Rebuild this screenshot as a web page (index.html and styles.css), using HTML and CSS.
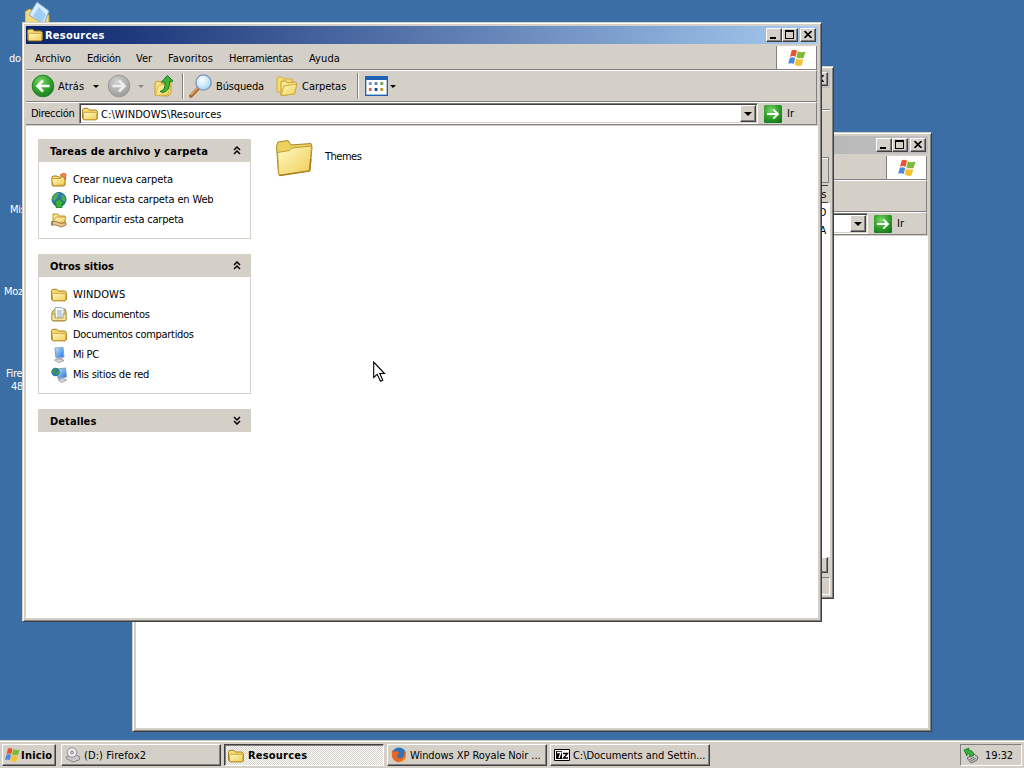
FILE: index.html
```html
<!DOCTYPE html>
<html lang="es">
<head>
<meta charset="utf-8">
<title>Resources</title>
<link rel="stylesheet" href="styles.css">
</head>
<body>
<svg class="defs" width="0" height="0">
  <defs>
    <linearGradient id="yel" x1="0" y1="0" x2="1" y2="1"><stop offset="0" stop-color="#fffac4"/><stop offset="1" stop-color="#f0cc55"/></linearGradient>
    <radialGradient id="grn" cx=".4" cy=".3" r=".8"><stop offset="0" stop-color="#7cd76b"/><stop offset=".5" stop-color="#36a52e"/><stop offset="1" stop-color="#13751a"/></radialGradient>
    <radialGradient id="gry" cx=".4" cy=".3" r=".8"><stop offset="0" stop-color="#d0d0ce"/><stop offset="1" stop-color="#969694"/></radialGradient>
    <radialGradient id="glass" cx=".4" cy=".35" r=".7"><stop offset="0" stop-color="#fff"/><stop offset="1" stop-color="#9bd8f4"/></radialGradient>
    <linearGradient id="screen" x1="0" y1="0" x2="1" y2="1"><stop offset="0" stop-color="#bfe6ff"/><stop offset="1" stop-color="#1c72e0"/></linearGradient>
    <symbol id="folder" viewBox="0 0 16 16"><path d="M.6 12.500V3.600L2 2.300h3.800L7.400 4h6.500l1.400 1.500v7.300l-1.200 1H1.800z" fill="#f6dc72" stroke="#a67a18"/><path d="M1.500 13.400V7.300l1-1h11.300l1 1v5.600l-1 .7H2z" fill="url(#yel)" stroke="#c0922a" stroke-width=".8"/></symbol>
    <symbol id="flag" viewBox="0 0 20 18"><path d="M4.600 1.600Q7 0 10 1.800L8.500 8Q6 6.300 3 7.900z" fill="#e9532c"/><path d="M10.900 2.200Q14 4 18.500 2.500L16.700 8.800Q13 10 9.400 8.400z" fill="#7dba36"/><path d="M2.700 8.900Q5.500 7.500 8.200 9L6.700 15Q4.500 13.500 1.200 14.800z" fill="#4c86dd"/><path d="M9.100 9.400Q12.500 11.200 16.400 9.900L14.600 16.500Q11 17.800 7.600 15.600z" fill="#f6c22d"/></symbol>
    <symbol id="go" viewBox="0 0 18 18"><rect width="18" height="18" rx="1.500" fill="url(#grn)"/><path d="M3 9H14M9.300 4.300 14 9 9.300 13.700" fill="none" stroke="#fff" stroke-width="1.800"/></symbol>
    <symbol id="chev" viewBox="0 0 8 9"><path d="M1 4 4 1 7 4M1 8 4 5 7 8" fill="none" stroke="#000" stroke-width="1.500"/></symbol>
    <symbol id="pc" viewBox="0 0 16 16"><path d="M4 1 12 .5 13 10 5 11z" fill="url(#screen)" stroke="#8c9cba"/><path d="M7 11 10.500 10.500 12 13H7z" fill="#b5b5c0"/><path d="M3.500 13 9 11.700 13 13.500 8 15.500z" fill="#d9d9df" stroke="#85858f" stroke-width=".7"/></symbol>
  </defs>
</svg>

<main class="desktop">
  <svg class="desk-icon" width="28" height="26" viewBox="0 0 28 26"><path d="M0 25V11l4-3 5 2 15 4v11z" fill="#f3dc78" stroke="#c3a03c"/><path d="M4 14 12 1l12 9-5 13z" fill="#d7edff" stroke="#7fa9d2"/><path d="M8 15 14 6l7 8-4 8z" fill="#9fcdf4"/></svg>
  <span class="desk-label l1">do</span>
  <span class="desk-label l2">Mis</span>
  <span class="desk-label l3">Moz</span>
  <span class="desk-label l4">Fire</span>
  <span class="desk-label l5">48</span>

  <section class="window back">
    <header class="titlebar inactive">
      <div class="caption"></div>
      <div class="controls"><button class="ctl"><i class="min"></i></button><button class="ctl"><i class="max"></i></button><button class="ctl close"><svg width="8" height="7"><path d="M.5 0 7.500 7M7.500 0 .5 7" stroke="#000" stroke-width="1.600"/></svg></button></div>
    </header>
    <div class="bars">
      <nav class="menubar"><div class="menus"></div><div class="brand"><svg width="20" height="18"><use href="#flag"/></svg></div></nav>
      <div class="toolbar"></div>
      <div class="address"><div class="field"><span class="path"></span><b class="drop"><i class="tri"></i></b></div><svg class="go" width="18" height="18"><use href="#go"/></svg><span class="ir">Ir</span></div>
    </div>
    <div class="content"></div>
  </section>

  <section class="window middle">
    <header class="titlebar inactive"><div class="caption"></div><div class="controls"><button class="ctl close"><svg width="8" height="7"><path d="M.5 0 7.500 7M7.500 0 .5 7" stroke="#000" stroke-width="1.600"/></svg></button></div></header>
    <div class="mid-menu"></div>
    <div class="mid-tools"></div>
    <div class="mid-field"></div>
    <div class="mid-head">s</div>
    <div class="mid-list"><span>D</span><span>A</span></div>
    <div class="mid-scroll"></div>
    <div class="mid-status"></div>
  </section>

  <section class="window front">
    <header class="titlebar">
      <svg width="16" height="16"><use href="#folder"/></svg>
      <div class="caption">Resources</div>
      <div class="controls"><button class="ctl"><i class="min"></i></button><button class="ctl"><i class="max"></i></button><button class="ctl close"><svg width="8" height="7"><path d="M.5 0 7.500 7M7.500 0 .5 7" stroke="#000" stroke-width="1.600"/></svg></button></div>
    </header>
    <div class="bars">
      <nav class="menubar">
        <div class="menus"><span class="m1">Archivo</span><span class="m2">Edición</span><span class="m3">Ver</span><span class="m4">Favoritos</span><span class="m5">Herramientas</span><span class="m6">Ayuda</span></div>
        <div class="brand"><svg width="20" height="18"><use href="#flag"/></svg></div>
      </nav>
      <div class="toolbar">
        <div class="tool back-btn"><svg width="24" height="24" viewBox="0 0 24 24"><circle cx="12" cy="12" r="10.800" fill="url(#grn)" stroke="#248422"/><path d="M18.500 12H7M12 6.500 6.500 12l5.500 5.500" fill="none" stroke="#fff" stroke-width="2.600"/></svg><span>Atrás</span><i class="tri"></i></div>
        <div class="tool fwd-btn"><svg width="24" height="24" viewBox="0 0 24 24"><circle cx="12" cy="12" r="10.800" fill="url(#gry)" stroke="#999"/><path d="M5.500 12H17M12 6.500 17.500 12 12 17.500" fill="none" stroke="#eee" stroke-width="2.600"/></svg><i class="tri dim"></i></div>
        <svg class="up-btn" width="20" height="24" viewBox="0 0 20 24"><path d="M1 21.500V9l2-2 4 1 1 2 9-2v11l-3 3z" fill="#f5e07c" stroke="#c69d2c"/><path d="M1.500 21.500 4 12l13-3-3 12z" fill="url(#yel)" stroke="#d3ad3b" stroke-width=".8"/><path d="M6 17.500Q12 16 11 8H7.500L13.500 1.500 19 7l-3.500.7Q16 17 9 18.500z" fill="#3eb334" stroke="#187a20"/></svg>
        <i class="sep"></i>
        <div class="tool search-btn"><svg width="24" height="24" viewBox="0 0 24 24"><path d="M2 22 9.500 14" stroke="#ad642b" stroke-width="3.600" stroke-linecap="round"/><path d="M2 21 9 13.500" stroke="#e9ae6a" stroke-width="1.300"/><circle cx="14.500" cy="8.500" r="7.600" fill="url(#glass)" stroke="#8193bd" stroke-width="1.400"/></svg><span>Búsqueda</span></div>
        <div class="tool folders-btn"><svg width="22" height="22" viewBox="0 0 22 22"><path d="M1 17V3l1-1 4 0 2 2 8 0v13z" fill="#f4dc72" stroke="#d0ab3e"/><path d="M5 20.500V7l1-1h4l1.500 2 8-1 1 1-2 11z" fill="#f9e891" stroke="#c69b2d"/><path d="M5 20.500 8 11l13-2-2.500 10z" fill="url(#yel)" stroke="#cfaa3b"/></svg><span>Carpetas</span></div>
        <i class="sep"></i>
        <svg class="views-btn" width="23" height="20" viewBox="0 0 24 20" preserveAspectRatio="none"><rect x=".7" y=".7" width="22.600" height="18.600" fill="#fff" stroke="#1d62b5" stroke-width="1.400"/><path d="M0 0H24V4H0z" fill="#1d62b5"/><path d="M4 6h3v3H4z" fill="#7894d0"/><path d="M10 6h3v3h-3z" fill="#6d84bd"/><path d="M16 6h3v3h-3z" fill="#71a94b"/><path d="M4 12h3v3H4z" fill="#dd6a50"/><path d="M10 12h3v3h-3z" fill="#174f9d"/><path d="M16 12h3v3h-3z" fill="#b09b35"/></svg><i class="tri"></i>
      </div>
      <div class="address"><span class="addr-label">Dirección</span><div class="field"><svg width="16" height="16"><use href="#folder"/></svg><span class="path">C:\WINDOWS\Resources</span><b class="drop"><i class="tri"></i></b></div><svg class="go" width="18" height="18"><use href="#go"/></svg><span class="ir">Ir</span></div>
    </div>
    <div class="content explorer">
      <aside class="tasks">
        <section class="panel">
          <h2><span class="h1w">Tareas de archivo y carpeta</span><svg width="8" height="9"><use href="#chev"/></svg></h2>
          <ul>
            <li><svg width="16" height="16" viewBox="0 0 16 16"><path d="M1 13V5l1-1h4l1 1h7v8l-1 1H2z" fill="#f6dc72" stroke="#a67a18"/><path d="M2 13.500 .8 6.500h9Q11 6 11 4l3 3-1 6z" fill="url(#yel)" stroke="#c0922a" stroke-width=".8"/><path d="M9 3Q12 0 15 2l-.5 6-2-3Q11 4 9 3z" fill="#f08a4a" stroke="#d0562a" stroke-width=".7"/></svg><span class="t1">Crear nueva carpeta</span></li>
            <li><svg width="16" height="16" viewBox="0 0 16 16"><circle cx="8" cy="7.500" r="7" fill="#2d79c5" stroke="#296a91"/><path d="M2 4q3-4 6-3L6 6 3 9 1 7zM10 2l4 3v5l-3-2z" fill="#52ab4e"/><path d="M2.500 12 8 6.500 13.500 12H11v3.500H5V12z" fill="#39b53b" stroke="#127225" stroke-width=".8"/></svg><span class="t2">Publicar esta carpeta en Web</span></li>
            <li><svg width="16" height="16" viewBox="0 0 16 16"><path d="M2 2h5l1 2h6v6H2z" fill="#ffec94" stroke="#ba9029"/><path d="M2 10 5 5h10l-2 6H3z" fill="url(#yel)" stroke="#ba9029" stroke-width=".8"/><path d="M1 9.500h4l5 2 5-1v2.500l-5 2-5-2H1z" fill="#edc48b" stroke="#8d6533" stroke-width=".8"/><path d="M0 9.500h2v4H0z" fill="#8d8a5a"/></svg><span class="t3">Compartir esta carpeta</span></li>
          </ul>
        </section>
        <section class="panel">
          <h2><span class="h2w">Otros sitios</span><svg width="8" height="9"><use href="#chev"/></svg></h2>
          <ul>
            <li><svg width="16" height="16"><use href="#folder"/></svg><span class="t4">WINDOWS</span></li>
            <li><svg width="16" height="16" viewBox="0 0 16 16"><path d="M1 13V5l3-3h10l1 3v8l-1 1H2z" fill="#f0d477" stroke="#a68533"/><path d="M4 .6h7l2 2v10H4z" fill="#fafdff" stroke="#7895a8" stroke-width=".8"/><path d="M6 4h5M6 6h5M6 8h5M6 10h5" stroke="#82a8c5"/><path d="M1 7h3v4h8V7h3v6.500H1z" fill="#f8e79b" stroke="#a68533" stroke-width=".7"/></svg><span class="t5">Mis documentos</span></li>
            <li><svg width="16" height="16"><use href="#folder"/></svg><span class="t6">Documentos compartidos</span></li>
            <li><svg width="16" height="16"><use href="#pc"/></svg><span class="t7">Mi PC</span></li>
            <li><svg width="16" height="16" viewBox="0 0 16 16"><path d="M6 2 14.500 1 15.500 10 7 11.500z" fill="url(#screen)" stroke="#8c9cba"/><path d="M7 13 12 11.500 15.500 13 11 15.500z" fill="#d9d9df" stroke="#85858f" stroke-width=".7"/><circle cx="4.500" cy="5" r="4.200" fill="#2d73c4"/><path d="M1 4q2-3 5-3L5 5 3 8zM5 6l3-3v4L6 9z" fill="#3d9945"/></svg><span class="t8">Mis sitios de red</span></li>
          </ul>
        </section>
        <section class="panel closed"><h2><span class="h3w">Detalles</span><svg class="flip" width="8" height="9"><use href="#chev"/></svg></h2></section>
      </aside>
      <div class="files"><svg width="40" height="38" viewBox="0 0 40 38"><path d="M3.500 35 1.500 7.500 3 3l10-1.500L16 6l20-1.500L37 8 35 31z" fill="#ecd15c" stroke="#a98425"/><path d="M4 36.500 2.500 13.500 14.500 11.500 17 9l19.500-2L34.500 32z" fill="url(#yel)" stroke="#c59b32"/><path d="M4.500 36.500 34.500 32l1.400-12" fill="none" stroke="#a97b1c" stroke-width="1.400"/></svg><span class="t9">Themes</span></div>
    </div>
  </section>
  <svg class="cursor" width="13" height="22" viewBox="0 0 13 22"><path d="M.7 1V16.500L4.200 13.300 7.500 20.300 9.800 19.300 6.800 12.500H11.500z" fill="#fff" stroke="#000" stroke-width="1.100"/></svg>
</main>

<footer class="taskbar">
  <button class="start"><svg width="17" height="16" viewBox="0 0 20 18"><use href="#flag"/></svg><span>Inicio</span></button>
  <div class="task-list">
    <button class="task"><svg width="16" height="16" viewBox="0 0 16 16"><path d="M1 10 9 7l6 3-1 3-6 2-6-3z" fill="#c9c9ce" stroke="#777" stroke-width=".8"/><circle cx="7" cy="5.500" r="4.800" fill="#ededf1" stroke="#8c8c92"/><circle cx="7" cy="5.500" r="1.500" fill="#c9c9ce" stroke="#888"/></svg><span class="k1">(D:) Firefox2</span></button>
    <button class="task pressed"><svg width="16" height="16"><use href="#folder"/></svg><span class="k2">Resources</span></button>
    <button class="task"><svg width="16" height="16" viewBox="0 0 16 16"><circle cx="8" cy="7.500" r="7" fill="#2e73b8"/><path d="M1 3Q3 6 5 4q3 0 3 3-2 0-2 2 1 3 4 2 4-1 3-7 4 5 0 9-4 4-9 1Q0 11 1 3z" fill="#ea6722"/><path d="M13 4q4 5-1 9-2 2-5 2 9 1 8-8z" fill="#ffb63c"/></svg><span class="k3">Windows XP Royale Noir ...</span></button>
    <button class="task"><svg width="16" height="16" viewBox="0 0 16 16"><path d="M.5 2.500h15v11H.5z" fill="#fff" stroke="#000"/><path d="M2 4h6v8H2z" fill="#000"/><path d="M3 5.500h4L5 11" fill="none" stroke="#fff" stroke-width="1.300"/><path d="M9 6.500h4.500L9.500 11h4.500" fill="none" stroke="#000" stroke-width="1.300"/></svg><span class="k4">C:\Documents and Settin...</span></button>
  </div>
  <div class="tray"><svg width="16" height="16" viewBox="0 0 16 16"><path d="M4 11 11 7l4 3-1 3-6 3z" fill="#ccc" stroke="#666"/><path d="M6 13 11 10M8 14l5-3" stroke="#666"/><path d="M1 3 6 1l-1 2q5 0 6 5l-4 2Q7 6 4 6v3z" fill="#39b43a" stroke="#176f25" stroke-width=".8"/></svg><span>19:32</span></div>
</footer>
</body>
</html>
```
FILE: styles.css
```css
* { box-sizing: border-box; }
body { margin: 0; width: 1024px; height: 768px; overflow: hidden; background: #3a6ea5; color: #000; font: 11px/14px "DejaVu Sans Condensed", "DejaVu Sans", sans-serif; letter-spacing: -0.3px; display: flex; flex-direction: column; }
button { font: inherit; letter-spacing: inherit; color: inherit; padding: 0; margin: 0; border: 0; background: #d4d0c8; }
span { white-space: nowrap; }
svg { flex: none; display: block; }
.defs { position: absolute; }
.desktop { position: relative; height: 740px; flex: none; }
.desk-icon { position: absolute; left: 25px; top: 1px; }
.desk-label { position: absolute; color: #fff; }
.l1 { left: 9px; top: 52px; }
.l2 { left: 10px; top: 203px; }
.l3 { left: 4px; top: 285px; }
.l4 { left: 6px; top: 367px; }
.l5 { left: 11px; top: 380px; }

/* Window frame */
.window { position: absolute; display: flex; flex-direction: column; background: #d4d0c8; border: 1px solid; border-color: #d4d0c8 #404040 #404040 #d4d0c8; box-shadow: inset 1px 1px #fff, inset -1px -1px #808080; padding: 3px; }
.front { left: 22px; top: 22px; width: 800px; height: 600px; }
.back { left: 132px; top: 132px; width: 800px; height: 600px; }
.middle { left: 234px; top: 66px; width: 600px; height: 533px; }
.titlebar { display: flex; align-items: center; flex: none; height: 18px; padding: 0 2px 0 1px; background: linear-gradient(90deg, #0a246a, #a6caf0); color: #fff; }
.titlebar.inactive { background: linear-gradient(90deg, #808080, #c0c0c0); }
.caption { flex: 1; font-weight: bold; padding-left: 2px; padding-top: 1px; letter-spacing: 0.25px; }
.controls { display: flex; }
.ctl { width: 16px; height: 14px; border: 1px solid; border-color: #fff #404040 #404040 #fff; box-shadow: inset -1px -1px #808080; display: flex; justify-content: center; align-items: center; padding: 0 1px 1px 0; }
.ctl.close { margin-left: 2px; }
.min { width: 6px; height: 2px; background: #000; margin: 7px 2px 0 0; }
.max { width: 9px; height: 9px; border: 1px solid #000; border-top-width: 2px; }

/* Menu, tool and address bars */
.bars { flex: none; padding: 2px 1px 0 0; height: 82px; }
.menubar { height: 24px; display: flex; border-bottom: 1px solid #808080; border-right: 1px solid #808080; }
.menus { flex: 1; display: flex; align-items: center; padding: 2px 0 0 9px; }
.menus span { flex: none; }
.m1 { width: 52px; letter-spacing: -0.15px; }
.m2 { width: 49px; }
.m3 { width: 32px; letter-spacing: 0; }
.m4 { width: 61px; letter-spacing: 0.03px; }
.m5 { width: 80px; }
.m6 { letter-spacing: 0.1px; }
.brand { width: 40px; background: #fff; border-left: 1px solid #808080; display: flex; align-items: center; justify-content: center; }
.toolbar { height: 32px; border-top: 1px solid #fff; border-right: 1px solid #808080; border-bottom: 1px solid #808080; display: flex; align-items: center; padding-left: 5px; }
.tool { display: flex; align-items: center; }
.tool span { padding-top: 1px; letter-spacing: -0.1px; }
.tri { border: 3px solid transparent; border-top-color: #000; border-bottom: 0; width: 0; height: 0; flex: none; }
.tri.dim { border-top-color: #888; }
.back-btn { width: 76px; }
.back-btn span { width: 38px; margin-left: 3px; letter-spacing: 0.1px; }
.back-btn .tri { margin-left: -3px; }
.fwd-btn { width: 47px; }
.fwd-btn .tri { margin-left: 7px; }
.sep { width: 2px; height: 26px; border-left: 1px solid #808080; border-right: 1px solid #fff; flex: none; }
.up-btn { margin-right: 8px; }
.search-btn { margin-left: 5px; width: 87px; }
.search-btn span { margin-left: 3px; letter-spacing: -0.15px; }
.folders-btn { width: 81px; }
.folders-btn span { margin-left: 4px; letter-spacing: -0.03px; }
.views-btn { margin: 0 2px 0 6px; }
.address { height: 23px; border-top: 1px solid #fff; border-right: 1px solid #808080; border-bottom: 1px solid #808080; display: flex; align-items: center; padding-left: 5px; }
.addr-label { width: 48px; padding-top: 1px; }
.field { width: 679px; height: 21px; border: 1px solid; border-color: #808080 #fff #fff #808080; box-shadow: inset 1px 1px #404040, inset -1px -1px #d4d0c8; background: #fff; display: flex; align-items: center; padding: 2px 1px 2px 2px; }
.back .field { margin-left: 48px; }
.path { flex: 1; padding: 2px 0 0 3px; letter-spacing: 0.08px; }
.drop { width: 16px; height: 17px; background: #d4d0c8; border: 1px solid; border-color: #fff #404040 #404040 #fff; box-shadow: inset -1px -1px #808080; display: flex; align-items: center; justify-content: center; }
.drop .tri { border-width: 4px 4px 0; }
.go { margin: 0 5px 0 6px; }
.ir { padding-top: 1px; letter-spacing: 0.2px; }
.content { flex: 1; background: #fff; }

/* Explorer contents */
.explorer { display: flex; min-height: 0; }
.tasks { width: 225px; padding: 13px 0 0 12px; display: flex; flex-direction: column; gap: 15px; }
.panel { border: 1px solid #d4d0c8; border-top: 0; }
.panel.closed { border-bottom: 0; }
.panel h2 { margin: 0 -1px; height: 23px; background: #d4d0c8; display: flex; align-items: center; justify-content: space-between; padding: 3px 10px 0 12px; font-size: 11px; font-weight: bold; line-height: 14px; }
.panel h2 svg { margin-top: -4px; }
.h1w { letter-spacing: 0.15px; }
.h2w { letter-spacing: -0.03px; }
.h3w { letter-spacing: 0.08px; }
.flip { transform: scaleY(-1); }
.panel ul { margin: 0; padding: 7px 0 9px 12px; list-style: none; }
.panel li { height: 20px; display: flex; align-items: center; gap: 6px; }
.panel li svg { margin-top: 2px; }
.panel li span { padding-top: 1px; position: static; }
.t1 { letter-spacing: -0.09px; }
.t2 { letter-spacing: -0.16px; }
.t3 { letter-spacing: -0.2px; }
.t4 { letter-spacing: 0.1px; }
.t8 { letter-spacing: -0.24px; }
.files { display: flex; align-items: flex-start; padding: 13px 0 0 24px; }
.files span { padding-top: 11px; margin-left: 10px; letter-spacing: -0.5px; }
.cursor { position: absolute; left: 373px; top: 361px; }

/* Partly covered archive manager */
.mid-menu { height: 21px; flex: none; }
.mid-tools { height: 48px; flex: none; border-top: 1px solid #808080; box-shadow: inset 0 1px #fff; }
.mid-field { height: 26px; flex: none; border: 1px solid #808080; box-shadow: inset 1px 1px #fff; margin-right: 1px; }
.mid-head { height: 18px; flex: none; text-align: right; border: 1px solid #404040; border-right: 0; margin: 2px 2px 0 0; padding: 2px 2px 0; }
.mid-list { flex: 1; background: #fff; display: flex; flex-direction: column; align-items: flex-end; padding: 1px 4px 0; line-height: 18px; }
.mid-scroll { height: 16px; flex: none; border: 1px solid; border-color: #fff #404040 #404040 #fff; box-shadow: inset -1px -1px #808080; margin-right: 2px; }
.mid-status { height: 18px; flex: none; border: 1px solid; border-color: #808080 #fff #fff #808080; margin-top: 4px; }

/* Taskbar */
.taskbar { height: 28px; background: #d4d0c8; border-top: 1px solid #d4d0c8; box-shadow: inset 0 1px #fff; display: flex; align-items: flex-start; padding: 3px 2px 0; }
.start, .task { height: 22px; border: 1px solid; border-color: #fff #404040 #404040 #fff; box-shadow: inset -1px -1px #808080; display: flex; align-items: center; }
.start { width: 54px; padding-left: 1px; font-weight: bold; margin-right: 5px; letter-spacing: 0.2px; }
.start span, .task span, .tray span { padding-top: 1px; }
.task-list { display: flex; gap: 3px; flex: 1; }
.task { width: 160px; padding-left: 3px; gap: 3px; }
.task.pressed { font-weight: bold; border-color: #404040 #fff #fff #404040; box-shadow: inset 1px 1px #808080; background: repeating-conic-gradient(#fff 0 25%, #d4d0c8 0 50%) 0 0 / 2px 2px; padding-top: 1px; gap: 4px; }
.k1 { letter-spacing: 0.1px; }
.k2 { letter-spacing: 0.2px; }
.k3 { letter-spacing: -0.07px; }
.k4 { letter-spacing: -0.04px; }
.tray { width: 62px; height: 22px; border: 1px solid; border-color: #808080 #fff #fff #808080; display: flex; align-items: center; padding-left: 2px; gap: 6px; letter-spacing: -0.1px; }
```
